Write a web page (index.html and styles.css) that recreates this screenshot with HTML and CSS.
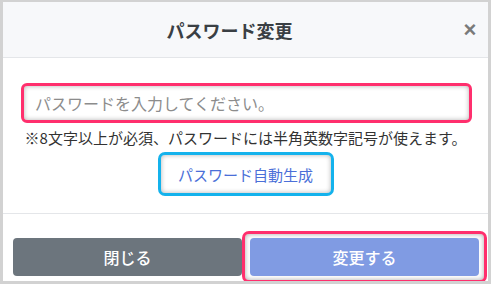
FILE: index.html
```html
<!DOCTYPE html>
<html lang="ja">
<head>
    <meta charset="UTF-8">
    <meta name="viewport" content="width=device-width, initial-scale=1.0">
    <title>パスワード変更</title>
    <link rel="stylesheet" href="styles.css">
</head>
<body>
    <div class="modal">
        <div class="modal-header">
            <h5 class="modal-title">パスワード変更</h5>
            <button class="close-button" type="button">×</button>
        </div>
        <div class="modal-body">
            <div class="input-container">
                <input type="password" class="password-input" placeholder="パスワードを入力してください。">
            </div>
            <p class="note">※8文字以上が必須、パスワードには半角英数字記号が使えます。</p>
            <div class="generate-container">
                <button class="generate-button" type="button">パスワード自動生成</button>
            </div>
        </div>
        <div class="modal-footer">
            <button class="button close-modal" type="button">閉じる</button>
            <div class="submit-wrap">
                <button class="button submit-button" type="button">変更する</button>
            </div>
        </div>
    </div>
</body>
</html>
```

FILE: styles.css
```css
body {
    font-family: "Noto Sans CJK JP", "Noto Sans", sans-serif;
    margin: 0;
    padding: 0;
    background-color: white;
}
.modal {
    width: 491px;
    height: 284px;
    box-sizing: border-box;
    border: 3px solid #d2d2d2;
    border-top-width: 2px;
    overflow: hidden;
    background-color: white;
}
.modal-header {
    display: flex;
    align-items: center;
    height: 55px;
    padding-left: 4px;
    background-color: #f7f8fa;
    border-bottom: 1px solid #e4e6e9;
}
.modal-title {
    flex: 1;
    margin: 0;
    text-align: center;
    font-size: 18px;
    font-weight: bold;
    color: #3a3f44;
}
.close-button {
    width: 36px;
    background: none;
    border: none;
    padding: 0;
    font-family: "Liberation Sans", sans-serif;
    font-size: 22px;
    font-weight: bold;
    color: #7a7a7a;
    cursor: pointer;
}
.modal-body {
    height: 155px;
    padding-top: 25px;
    box-sizing: border-box;
}
.input-container {
    padding: 0 16px 0 18px;
}
.password-input {
    width: 100%;
    height: 40px;
    box-sizing: border-box;
    border: 3px solid #ff2f6d;
    border-radius: 6px;
    box-shadow: inset 0 0 5px rgba(0, 0, 0, 0.3);
    padding: 0 11px;
    font-family: inherit;
    font-size: 16px;
    outline: none;
}
.password-input::placeholder {
    color: #8c8c8c;
}
.note {
    margin: 5px 0 0;
    text-align: center;
    font-size: 15px;
    line-height: 20px;
    color: #333;
}
.generate-container {
    margin-top: 4px;
    text-align: center;
}
.generate-button {
    width: 176px;
    height: 44px;
    border: 3px solid #14b2ec;
    border-radius: 7px;
    background-color: white;
    box-shadow: inset 0 0 5px rgba(0, 0, 0, 0.3);
    font-family: inherit;
    font-size: 15px;
    color: #4b6fd8;
    cursor: pointer;
}
.modal-footer {
    display: flex;
    align-items: flex-start;
    gap: 8px;
    padding: 24px 9px 0 10px;
    border-top: 1px solid #e4e6e9;
}
.button {
    height: 38px;
    border: none;
    border-radius: 4px;
    font-family: inherit;
    font-size: 16px;
    font-weight: 500;
    color: white;
    cursor: pointer;
}
.close-modal {
    width: 229px;
    background-color: #6c757d;
}
.submit-wrap {
    width: 245px;
    box-sizing: border-box;
    margin: -7px -8px;
    padding: 4px 5px;
    border: 3px solid #ff2f6d;
    border-radius: 7px;
    box-shadow: inset 0 0 5px rgba(0, 0, 0, 0.35);
}
.submit-button {
    display: block;
    width: 229px;
    background-color: #809be3;
}
```
